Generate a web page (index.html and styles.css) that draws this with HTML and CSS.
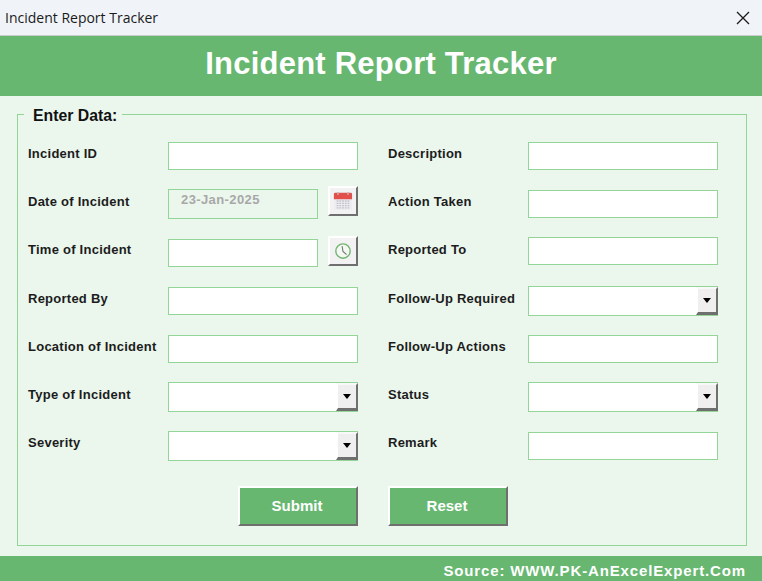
FILE: index.html
```html
<!DOCTYPE html>
<html lang="en">
<head>
    <meta charset="UTF-8">
    <meta name="viewport" content="width=device-width, initial-scale=1.0">
    <title>Incident Report Tracker</title>
    <link rel="stylesheet" href="styles.css">
</head>
<body>

    <div class="titlebar">
        <span>Incident Report Tracker</span>
        <svg class="close-icon" width="14" height="14" viewBox="0 0 14 14"><path d="M1 1L13 13M13 1L1 13" stroke="#1a1a1a" stroke-width="1.3" fill="none"/></svg>
    </div>

    <h1>Incident Report Tracker</h1>

    <div class="content">
        <fieldset class="form-frame">
            <legend>Enter Data:</legend>
            <div class="form-grid">
                <div class="row"><label>Incident ID</label><div class="field"></div></div>
                <div class="row"><label>Description</label><div class="field"></div></div>

                <div class="row">
                    <label>Date of Incident</label>
                    <div class="field short date-value">23-Jan-2025</div>
                    <button class="icon-btn">
                        <svg width="20" height="20" viewBox="0 0 22 22">
                            <rect x="1" y="2" width="20" height="19" rx="1.5" fill="#ececf1"/>
                            <path d="M1 9V3.5A1.5 1.5 0 0 1 2.500 2H19.500A1.500 1.500 0 0 1 21 3.500V9Z" fill="#e2504c"/>
                            <path d="M5.500 1V4.500M16.500 1V4.500" stroke="#c4b6b3" stroke-width="1.500"/>
                            <path d="M4 11H18M4 13.500H18M4 16H18M4 18.500H18" stroke="#c2c3c9" stroke-width="1.400" stroke-dasharray="2 1"/>
                        </svg>
                    </button>
                </div>
                <div class="row"><label>Action Taken</label><div class="field"></div></div>

                <div class="row">
                    <label>Time of Incident</label>
                    <div class="field short"></div>
                    <button class="icon-btn clock-btn">
                        <svg width="18" height="18" viewBox="0 0 20 20">
                            <circle cx="10" cy="10" r="8" fill="#f4f7f2" stroke="#6fb46f" stroke-width="1.500"/>
                            <path d="M9 4.500L10 10.500L14 14" stroke="#6d7a6d" stroke-width="1.200" fill="none"/>
                        </svg>
                    </button>
                </div>
                <div class="row"><label>Reported To</label><div class="field raised"></div></div>

                <div class="row"><label>Reported By</label><div class="field"></div></div>
                <div class="row"><label>Follow-Up Required</label><div class="field combo"><span class="combo-btn"></span></div></div>

                <div class="row"><label>Location of Incident</label><div class="field"></div></div>
                <div class="row"><label>Follow-Up Actions</label><div class="field"></div></div>

                <div class="row"><label>Type of Incident</label><div class="field combo"><span class="combo-btn"></span></div></div>
                <div class="row"><label>Status</label><div class="field combo"><span class="combo-btn"></span></div></div>

                <div class="row"><label>Severity</label><div class="field combo"><span class="combo-btn"></span></div></div>
                <div class="row"><label>Remark</label><div class="field"></div></div>
            </div>
            <div class="actions">
                <button class="action-btn">Submit</button>
                <button class="action-btn">Reset</button>
            </div>
        </fieldset>
    </div>

    <div class="footer">Source: WWW.PK-AnExcelExpert.Com</div>

</body>
</html>
```

FILE: styles.css
```css
* {
    box-sizing: border-box;
}
html, body {
    height: 100%;
}
body {
    margin: 0;
    background-color: #ebf7ed;
    font-family: "Liberation Sans", Arial, sans-serif;
    display: flex;
    flex-direction: column;
    overflow: hidden;
}
.titlebar {
    height: 36px;
    padding: 0 12px 0 5px;
    background-color: #f0f4f9;
    border-bottom: 1px solid #c9cdcb;
    color: #1a1a1a;
    font-family: "Open Sans", sans-serif;
    font-size: 14px;
    display: flex;
    align-items: center;
    justify-content: space-between;
}
h1 {
    margin: 0;
    height: 60px;
    padding-bottom: 4px;
    background-color: #67b771;
    color: #fff;
    font-size: 31px;
    letter-spacing: 0.23px;
    display: flex;
    align-items: center;
    justify-content: center;
}
.content {
    flex: 1;
    padding: 8px 15px 10px 17px;
}
.form-frame {
    height: 100%;
    margin: 0;
    padding: 18px 28px 19px 10px;
    border: 1px solid #93d497;
    display: flex;
    flex-direction: column;
}
legend {
    margin-left: -4px;
    padding: 4px 5px 0 9px;
    font-size: 15.800px;
    line-height: 16px;
    font-weight: bold;
    color: #111;
}
.form-grid {
    display: grid;
    grid-template-columns: 330px 330px;
    column-gap: 30px;
    row-gap: 20.250px;
    grid-auto-rows: 28px;
}
.row {
    display: flex;
    align-items: center;
}
label {
    width: 140px;
    flex-shrink: 0;
    padding-bottom: 5.500px;
    font-size: 13px;
    font-weight: bold;
    letter-spacing: 0.25px;
    color: #1c1c1c;
}
.field {
    width: 190px;
    height: 28px;
    flex-shrink: 0;
    background-color: #fff;
    border: 1px solid #93d497;
}
.field.short {
    width: 150px;
}
.field.raised {
    margin-bottom: 4px;
}
.date-value {
    height: 30px;
    padding: 2px 0 0 12px;
    background-color: #ebf7ed;
    color: #a8a8a8;
    font-size: 13px;
    font-weight: bold;
    letter-spacing: 0.4px;
}
.icon-btn {
    width: 30px;
    height: 30px;
    flex-shrink: 0;
    margin-left: 10px;
    margin-bottom: 6px;
    padding: 0;
    background-color: #f2f2f2;
    border-style: solid;
    border-width: 2px;
    border-color: #fff #6f6f6f #6f6f6f #fff;
    display: flex;
    align-items: center;
    justify-content: center;
}
.clock-btn {
    margin-bottom: 3px;
}
.combo {
    height: 30px;
    display: flex;
    justify-content: flex-end;
}
.combo-btn {
    width: 22px;
    margin-right: -1px;
    background-color: #efefef;
    border-style: solid;
    border-width: 2px 2px 3px 2px;
    border-color: #f8f8f8 #6f6f6f #6f6f6f #fff;
    display: flex;
    align-items: center;
    justify-content: center;
}
.combo-btn::after {
    content: "";
    border-style: solid;
    border-width: 5px 4.500px 0 4.500px;
    border-color: #000 transparent transparent transparent;
}
.actions {
    margin-top: 26.500px;
    padding-left: 210px;
    display: flex;
    gap: 30px;
}
.action-btn {
    width: 120px;
    height: 40px;
    padding: 0 2px 2px 0;
    background-color: #67b771;
    color: #fff;
    font-family: "Liberation Sans", Arial, sans-serif;
    font-size: 15px;
    font-weight: bold;
    border-style: solid;
    border-width: 2px;
    border-color: #fff #6f6f6f #6f6f6f #fff;
}
.footer {
    height: 25px;
    padding: 3px 16px 0 0;
    background-color: #67b771;
    color: #fff;
    font-size: 15px;
    font-weight: bold;
    letter-spacing: 0.86px;
    display: flex;
    align-items: center;
    justify-content: flex-end;
}
```
